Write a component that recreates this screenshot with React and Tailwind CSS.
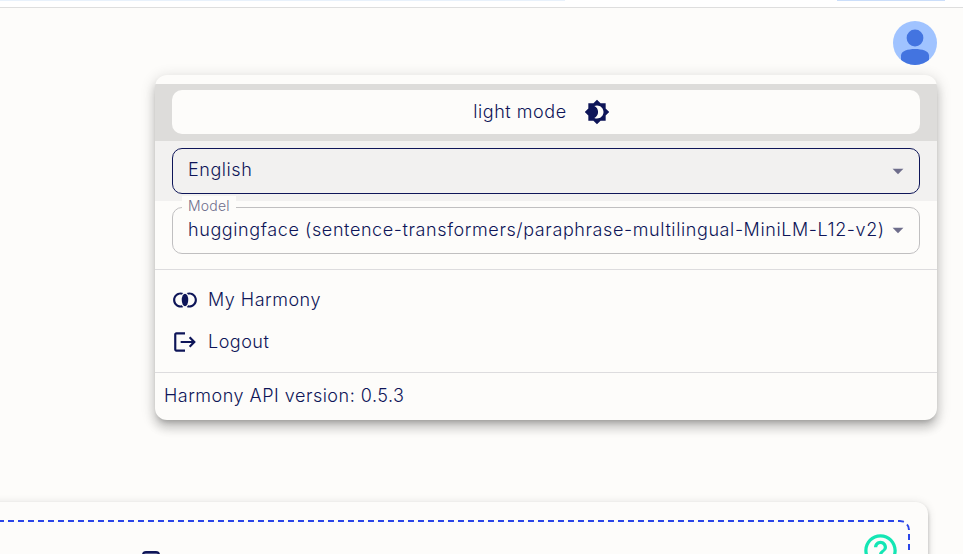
import React from "react";
import {
  MdBrightness4,
  MdJoinInner,
  MdLogout,
  MdArrowDropDown,
  MdHelpOutline,
} from "react-icons/md";

function Avatar() {
  return (
    <svg viewBox="0 0 44 44" className="size-11 shrink-0">
      <defs>
        <clipPath id="avatar-circle">
          <circle cx="22" cy="22" r="22" />
        </clipPath>
      </defs>
      <g clipPath="url(#avatar-circle)">
        <rect width="44" height="44" fill="#a0c3ff" />
        <circle cx="22" cy="17" r="8.4" fill="#4374e0" />
        <path d="M8 46V34.500C8 30 15 28 22 28s14 2 14 6.500V46z" fill="#4374e0" />
      </g>
    </svg>
  );
}

function MenuLink({ icon: Icon, label }) {
  return (
    <div className="flex h-[42px] items-center gap-[10px] pl-[17px]">
      <Icon className="size-[26px]" />
      <span className="-mt-[2px] text-[18px] tracking-[0.5px]">{label}</span>
    </div>
  );
}

function Menu() {
  return (
    <div className="absolute left-[155px] top-[75px] flex h-[345px] w-[782px] flex-col overflow-hidden rounded-[12px] bg-[#fdfcfa] pt-[9px] shadow-[0_5px_5px_-3px_rgba(0,0,0,0.2),0_8px_10px_1px_rgba(0,0,0,0.14),0_3px_14px_2px_rgba(0,0,0,0.12)]">
      <div className="h-[57px] shrink-0 bg-[#dddcda] px-[17px] pt-[6px]">
        <div className="flex h-11 items-center justify-center gap-[17px] rounded-[10px] bg-[#fdfcfa] pr-[9px]">
          <span className="-mt-[2px] text-[18px] tracking-[0.55px]">light mode</span>
          <MdBrightness4 className="size-[26px]" />
        </div>
      </div>
      <div className="h-[60px] shrink-0 bg-[#f2f1f0] px-[17px] pt-[7px]">
        <div className="flex h-[46px] items-center justify-between rounded-[10px] border border-[#0e1558] pl-[15px] pr-[9px]">
          <span className="-mt-[4px] text-[18px] tracking-[0.55px]">English</span>
          <MdArrowDropDown className="size-[26px] -mr-px text-[#6e6d8b]" />
        </div>
      </div>
      <div className="shrink-0 px-[17px] pt-[6px]">
        <div className="relative flex h-[47px] items-center justify-between rounded-[10px] border border-[#c0bfc0] pl-[15px] pr-[9px]">
          <span className="absolute -top-[12px] left-[9px] bg-[#fdfcfa] px-[6px] text-[14px] leading-[20px] tracking-[0.2px] text-[#6e6d8b]">
            Model
          </span>
          <span className="-mt-[2px] whitespace-nowrap text-[18px] tracking-[0.6px]">
            huggingface (sentence-transformers/paraphrase-multilingual-MiniLM-L12-v2)
          </span>
          <MdArrowDropDown className="size-[26px] -mr-px -mt-px shrink-0 text-[#6e6d8b]" />
        </div>
      </div>
      <div className="mt-[15px] h-px shrink-0 bg-[#dddcde]" />
      <div className="h-[102px] shrink-0 pt-[9px]">
        <MenuLink icon={MdJoinInner} label="My Harmony" />
        <MenuLink icon={MdLogout} label="Logout" />
      </div>
      <div className="h-px shrink-0 bg-[#dddcde]" />
      <div className="flex h-[44px] items-center pl-[9px] text-[18px] tracking-[0.5px]">
        Harmony API version: 0.5.3
      </div>
    </div>
  );
}

export default function App() {
  return (
    <div className="relative flex h-[554px] w-[963px] flex-col overflow-hidden bg-[#fdfcfa] font-['Inter','Liberation_Sans',sans-serif] font-light text-[#0e1558]">
      <div className="flex h-2 shrink-0 justify-between border-b border-[#dedede] bg-white pr-[18px]">
        <div className="h-px w-[565px] bg-[#e8f1fb]" />
        <div className="h-px w-[108px] bg-[#cbdefa]" />
      </div>
      <header className="flex h-[494px] shrink-0 justify-end pr-[26px] pt-[13px]">
        <Avatar />
      </header>
      <main className="-ml-[40px] mr-[35px] h-[120px] shrink-0 rounded-[12px] bg-[#fdfcfa] px-[18px] pt-[18px] shadow-[0_2px_4px_-1px_rgba(0,0,0,0.2),0_4px_5px_0_rgba(0,0,0,0.12),0_1px_10px_0_rgba(0,0,0,0.12)]">
        <div className="flex h-[100px] items-start justify-between rounded-[10px] border-2 border-dashed border-[#2a45e8] pl-[162px] pr-[8px]">
          <div className="mt-[29px] h-6 w-[18px] rounded-[4px] border-2 border-[#0e1558] bg-[#5a5e8e]" />
          <MdHelpOutline className="mt-[9px] size-[39px] text-[#14e6b4]" />
        </div>
      </main>
      <Menu />
    </div>
  );
}
